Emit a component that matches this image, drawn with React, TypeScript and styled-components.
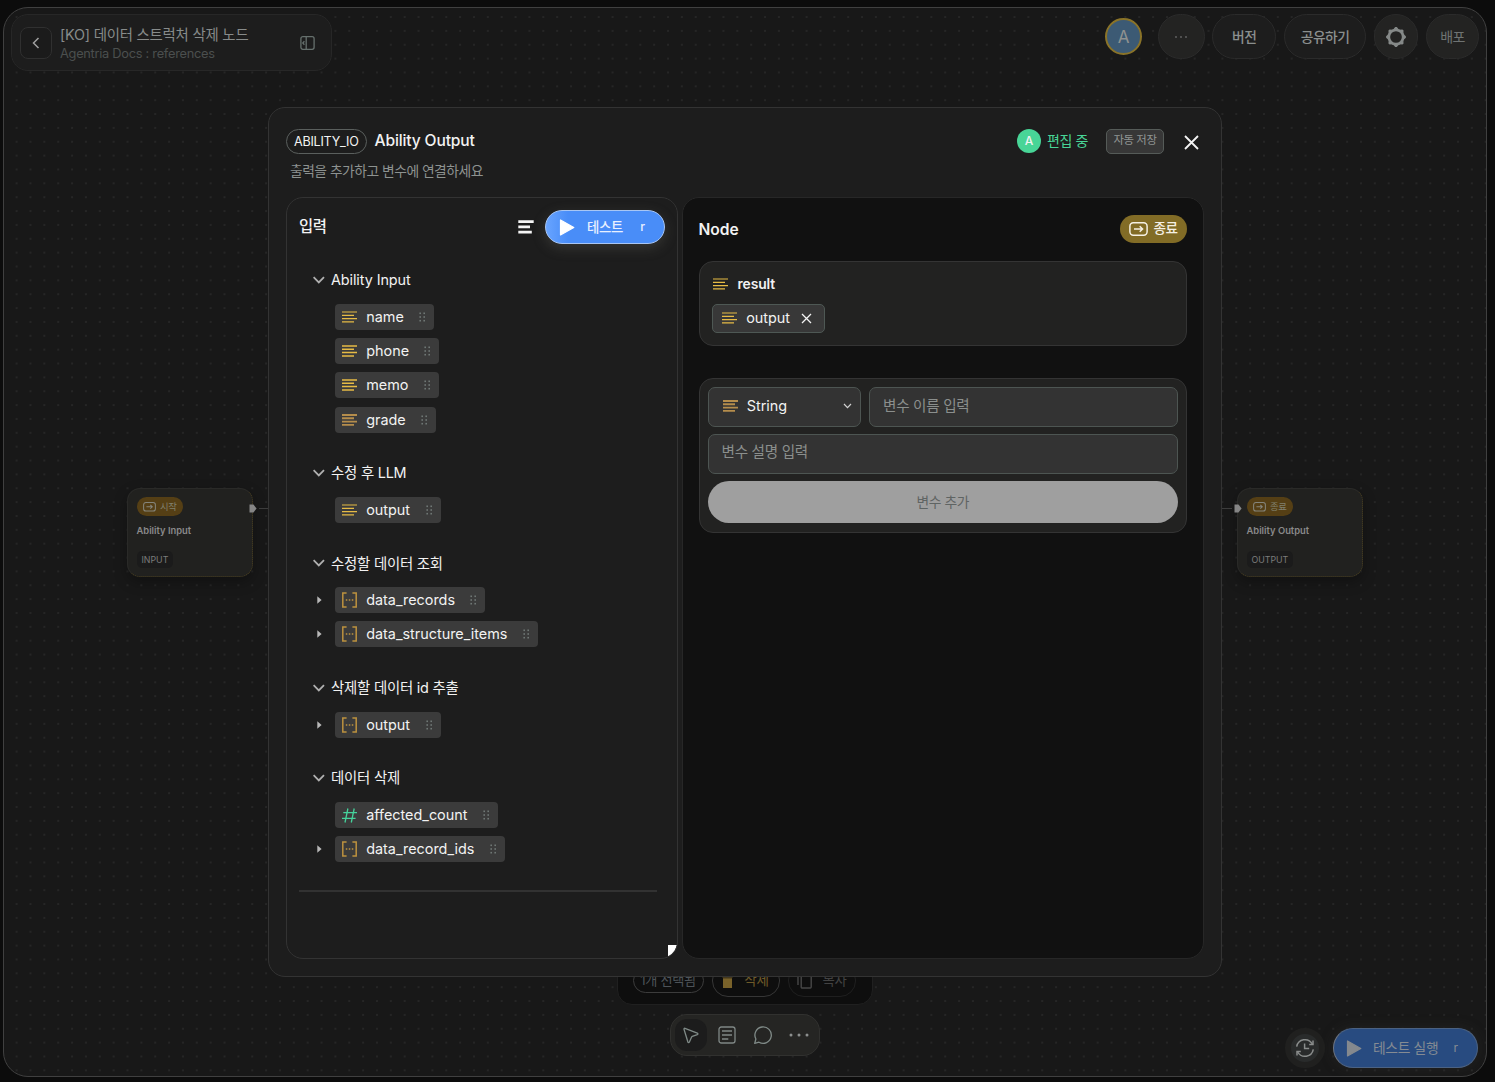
import React from "react";
import styled, { createGlobalStyle, css } from "styled-components";

const FONT = `Inter, "Noto Sans CJK KR", "Noto Sans", sans-serif`;

const GlobalStyle = createGlobalStyle`
  *, *::before, *::after { box-sizing: border-box; }
  body {
    margin: 0;
    background: #0c0c0c;
    font-family: ${FONT};
    color: #f2f2f2;
    overflow: hidden;
  }
  button, input { font-family: inherit; margin: 0; padding: 0; }
  svg { display: block; flex: none; }
`;

/* ---------- shared ---------- */

const Label = styled.span<{
  $size: number;
  $color?: string;
  $weight?: number;
  $track?: number;
}>`
  font-size: ${(p) => p.$size}px;
  line-height: 1.2;
  font-weight: ${(p) => p.$weight ?? 400};
  color: ${(p) => p.$color ?? "#f2f2f2"};
  letter-spacing: ${(p) => p.$track ?? 0}em;
  white-space: nowrap;
`;

const Spacer = styled.div`
  flex: 1;
`;

/* ---------- stage ---------- */

const Page = styled.div`
  display: grid;
  width: 1495px;
  height: 1082px;
  padding: 7px 8px 5px 3px;
  background: #0c0c0c;
`;

const Stage = styled.main`
  position: relative;
  display: flex;
  flex-direction: column;
  justify-content: space-between;
  overflow: hidden;
  border: 1px solid #404040;
  border-radius: 25px;
  background-color: #181818;
  background-image: radial-gradient(circle, #292929 0.6px, transparent 1.1px);
  background-size: 13.87px 13.87px;
  background-position: 5.7px 2.1px;
`;

const TopBar = styled.header`
  display: flex;
  align-items: flex-start;
  padding: 6px 7px 0 7px;
`;

const TitleCard = styled.div`
  display: flex;
  align-items: center;
  width: 321px;
  height: 57px;
  padding: 0 16px 0 8px;
  border: 1px solid #272727;
  border-radius: 17px;
  background: #1d1d1d;
`;

const BackButton = styled.button`
  display: grid;
  place-items: center;
  width: 32px;
  height: 32px;
  margin-right: 8px;
  border: 1px solid #303030;
  border-radius: 8px;
  background: #1b1b1b;
`;

const TitleLines = styled.div`
  display: flex;
  flex-direction: column;
  gap: 3px;
  padding-top: 3px;
`;

const TopActions = styled.div`
  display: flex;
  align-items: center;
  gap: 7.6px;
`;

const UserAvatar = styled.div`
  display: grid;
  place-items: center;
  width: 37px;
  height: 37px;
  margin-right: 8.5px;
  padding-top: 1px;
  border: 2px solid #8a7328;
  border-radius: 50%;
  background: #3c5a74;
`;

const TopPill = styled.button<{ $width: number; $warm?: boolean }>`
  display: grid;
  place-items: center;
  width: ${(p) => p.$width}px;
  height: 45px;
  padding-top: 1px;
  border: 1px solid #2b2b2b;
  border-radius: 23px;
  background: ${(p) => (p.$warm ? "#232322" : "#1d1d1d")};
`;

/* ---------- canvas nodes ---------- */

const NodeCard = styled.article<{ $x: number }>`
  position: absolute;
  left: ${(p) => p.$x}px;
  top: 480px;
  display: flex;
  flex-direction: column;
  align-items: flex-start;
  width: 126px;
  height: 89px;
  padding: 8px 8.5px;
  border: 1px solid #2a2a28;
  border-right: 1px dotted #4b4021;
  border-bottom: 1px dotted #4b4021;
  border-radius: 13px;
  background: #21211f;
  box-shadow: 0 5px 14px rgba(0, 0, 0, 0.3);
`;

const NodeBadge = styled.div`
  display: flex;
  align-items: center;
  gap: 4.5px;
  height: 20px;
  padding: 0 6px;
  border-radius: 10px;
  background: #553f15;
`;

const NodeName = styled.div`
  margin-top: 9px;
  font-size: 9.4px;
  font-weight: 600;
  line-height: 12px;
  color: #8a8a8a;
`;

const NodeTag = styled.div`
  display: flex;
  align-items: center;
  height: 17px;
  margin-top: 14px;
  padding: 0 5px;
  border-radius: 5px;
  background: #1b1b1b;
  font-size: 8.8px;
  color: #7c7c7c;
`;

const Connector = styled.div<{ $x: number; $reverse?: boolean }>`
  position: absolute;
  left: ${(p) => p.$x}px;
  top: 496px;
  display: flex;
  flex-direction: ${(p) => (p.$reverse ? "row-reverse" : "row")};
  align-items: center;
  gap: 2px;
  height: 9px;

  &::after {
    content: "";
    width: 12px;
    height: 1px;
    background: #3c3c3c;
  }
`;

/* ---------- bottom controls ---------- */

const BottomArea = styled.footer`
  display: grid;
  grid-template-columns: 1fr 256px 1fr;
  align-items: end;
`;

const BottomCenter = styled.div`
  display: flex;
  grid-column: 2;
  flex-direction: column;
  align-items: center;
  gap: 9px;
  padding-bottom: 20px;
`;

const SelectionBar = styled.div`
  display: flex;
  align-items: center;
  justify-content: center;
  gap: 8px;
  width: 256px;
  height: 49px;
  padding-right: 2px;
  border: 1px solid #202020;
  border-radius: 15px;
  background: #0e0e0e;
`;

const SelectionPill = styled.div<{ $h: number; $w: number; $line: string }>`
  display: flex;
  align-items: center;
  justify-content: center;
  gap: 11px;
  width: ${(p) => p.$w}px;
  height: ${(p) => p.$h}px;
  border: 1px solid ${(p) => p.$line};
  border-radius: 16px;
`;

const Toolbar = styled.nav`
  display: flex;
  align-items: center;
  gap: 4px;
  height: 42px;
  padding: 0 4px;
  border: 1px solid #31312f;
  border-radius: 17px;
  background: #252523;
`;

const ToolButton = styled.button<{ $active?: boolean }>`
  display: grid;
  place-items: center;
  width: 32px;
  height: 32px;
  border: 0;
  border-radius: 12px;
  background: ${(p) => (p.$active ? "#1c1c1c" : "transparent")};
`;

const RunArea = styled.div`
  display: flex;
  align-items: center;
  justify-content: flex-end;
  gap: 8px;
  padding: 0 8px 8px 0;
`;

const HistoryButton = styled.button`
  display: grid;
  place-items: center;
  width: 40px;
  height: 40px;
  border: 6px solid #20201f;
  border-radius: 50%;
  background: #292b2b;
`;

const RunButton = styled.button`
  display: flex;
  align-items: center;
  width: 145px;
  height: 40px;
  padding: 0 19px 0 11.5px;
  border: 1px solid #4b6283;
  border-left-color: #6d7480;
  border-radius: 20px;
  background: #284b80;
  box-shadow: 0 0 14px rgba(60, 60, 55, 0.3);

  > span:first-of-type {
    margin-left: 11.5px;
  }
`;

/* ---------- modal ---------- */

const Overlay = styled.div`
  position: absolute;
  inset: 0;
  display: grid;
  place-items: center;
  pointer-events: none;
`;

const Dialog = styled.section`
  display: flex;
  flex-direction: column;
  width: 954px;
  height: 870px;
  padding: 20px 17px 17px;
  border: 1px solid #333;
  border-radius: 17px;
  background: #1d1d1d;
`;

const DialogHeader = styled.header`
  display: flex;
  align-items: center;
  height: 26px;
`;

const KindPill = styled.div`
  display: grid;
  place-items: center;
  width: 80.5px;
  height: 25px;
  margin-right: 8px;
  padding-top: 1px;
  border: 1px solid #5a5f5d;
  border-radius: 13px;
`;

const EditorAvatar = styled.div`
  display: grid;
  place-items: center;
  width: 24px;
  height: 24px;
  margin-right: 6px;
  padding-top: 1px;
  border-radius: 50%;
  background: #48d597;
`;

const SaveButton = styled.button`
  display: grid;
  place-items: center;
  width: 58px;
  height: 25px;
  margin: 0 20px 0 18px;
  border: 1px solid #555b58;
  border-radius: 5px;
  background: #373737;
`;

const CloseButton = styled.button`
  display: grid;
  place-items: center;
  width: 15px;
  height: 15px;
  margin: 2px 5px 0 0;
  border: 0;
  background: none;
`;

const DialogHint = styled.p`
  display: flex;
  align-items: center;
  height: 20px;
  margin: 7px 0 16px 4px;
`;

const Panels = styled.div`
  display: grid;
  grid-template-columns: 392px 522px;
  gap: 4px;
  flex: 1;
`;

const InputPanel = styled.section`
  position: relative;
  display: flex;
  flex-direction: column;
  overflow: hidden;
  padding: 12px 12px 0 12px;
  border: 1px solid #333;
  border-radius: 17px;
  background: #1d1d1d;
`;

const InputPanelHeader = styled.div`
  display: flex;
  align-items: center;
  height: 34px;
`;

const TestButton = styled.button`
  display: flex;
  align-items: center;
  width: 120px;
  height: 34px;
  margin-left: 11px;
  padding: 0 19px 0 13px;
  border: 1px solid #a8c6f4;
  border-radius: 17px;
  background: linear-gradient(90deg, #68a4ff 0, #498df8 22px);
  box-shadow: 0 4px 13px rgba(110, 110, 100, 0.32);

  > span:first-of-type {
    margin-left: 12px;
  }
`;

const Tree = styled.div`
  display: flex;
  flex-direction: column;
  gap: 28.3px;
  padding: 24px 0 28px 14px;
`;

const Group = styled.div`
  display: flex;
  flex-direction: column;
  gap: 8.17px;
`;

const GroupTitle = styled.div`
  display: flex;
  align-items: center;
  gap: 6px;
  height: 24px;
  margin-bottom: 3.9px;
`;

const TreeRow = styled.div`
  display: flex;
  align-items: center;
  height: 26px;
`;

const CaretSlot = styled.div`
  width: 22px;
  padding-left: 3.5px;
`;

const Chip = styled.div`
  display: flex;
  align-items: center;
  height: 26px;
  padding: 0 8px 0 7px;
  border-radius: 4px;
  background: #3b3b3b;
`;

const ChipText = styled.span<{ $w: number }>`
  width: ${(p) => p.$w}px;
  margin: 0 14.5px 0 9.2px;
  font-size: 14.4px;
  line-height: 20px;
  white-space: nowrap;
`;

const Divider = styled.hr`
  width: 358px;
  height: 2px;
  margin: 0;
  border: 0;
  background: #323232;
`;

const ResizeHandle = styled.div`
  position: absolute;
  right: 0;
  bottom: 0;
  width: 9px;
  height: 13px;
  background: #fff;
  clip-path: polygon(0 0, 100% 0, 78% 40%, 42% 75%, 0 90%);
`;

const NodePanel = styled.section`
  display: flex;
  flex-direction: column;
  padding: 16px 16px 0 15.5px;
  border: 1px solid #272727;
  border-radius: 17px;
  background: #111;
`;

const NodePanelHeader = styled.div`
  display: flex;
  align-items: center;
  justify-content: space-between;
  height: 29px;
  padding-right: 0.5px;

  > span {
    padding-top: 3px;
  }
`;

const EndBadge = styled.div`
  display: flex;
  align-items: center;
  gap: 6px;
  width: 67px;
  height: 28px;
  padding-left: 9px;
  border-radius: 14px;
  background: #826c26;
`;

const cardSurface = css`
  border: 1px solid #343434;
  border-radius: 14px;
  background: #222221;
`;

const ResultCard = styled.div`
  ${cardSurface}
  display: flex;
  flex-direction: column;
  align-items: flex-start;
  gap: 10px;
  height: 85px;
  margin-top: 18px;
  padding: 12px 12.5px;
`;

const ResultTitle = styled.div`
  display: flex;
  align-items: center;
  gap: 9.5px;
  height: 20px;
  padding-left: 1px;
`;

const OutputChip = styled.div`
  display: flex;
  align-items: center;
  width: 112.5px;
  height: 29.5px;
  padding-left: 9px;
  border: 1px solid #4e5854;
  border-radius: 5px;
  background: #383838;
`;

const FormCard = styled.form`
  ${cardSurface}
  display: grid;
  grid-template-columns: 153.5px 1fr;
  grid-template-rows: 39.5px 39.5px 42px;
  gap: 7.7px 8px;
  height: 154.6px;
  margin-top: 32px;
  padding: 8px;
`;

const fieldSurface = css`
  border: 1px solid #4d5552;
  border-radius: 7px;
  background: #333;
`;

const TypeSelect = styled.div`
  ${fieldSurface}
  display: flex;
  align-items: center;
  padding: 0 8px 1px 14px;
`;

const Field = styled.input<{ $wide?: boolean }>`
  ${fieldSurface}
  grid-column: ${(p) => (p.$wide ? "1 / -1" : "auto")};
  min-width: 0;
  padding: ${(p) => (p.$wide ? "0 13px 4px" : "0 13px 2px")};
  font-size: 14.6px;
  letter-spacing: -0.02em;
  outline: none;

  &::placeholder {
    color: #8b8f8d;
    opacity: 1;
  }
`;

const AddButton = styled.button`
  grid-column: 1 / -1;
  border: 0;
  border-radius: 21px;
  background: #9f9f9f;
`;

/* ---------- icons ---------- */

const LinesIcon = ({ tan, thick }: { tan?: boolean; thick?: boolean }) => (
  <svg width="15" height="12" viewBox="0 0 15 12">
    <path
      d="M0 1H15M0 4.3H12M0 7.6H15M0 10.9H12"
      stroke={tan ? "#b58d4c" : "#e6bb45"}
      strokeWidth={tan ? 1.9 : thick ? 1.5 : 1.2}
    />
  </svg>
);

const ArrayIcon = () => (
  <svg width="15" height="16" viewBox="0 0 15 16" fill="none">
    <path d="M4.6 1H.8v14h3.8M10.4 1h3.8v14h-3.8" stroke="#bd923f" strokeWidth="1.5" />
    <path d="M3.8 8h1.5M6.8 8h1.5M9.8 8h1.5" stroke="#bd923f" strokeWidth="1.3" />
  </svg>
);

const HashIcon = () => (
  <svg width="15" height="15" viewBox="0 0 15 15" fill="none">
    <path d="M5.9.5 3 14.5M12.2.5 9.3 14.5M1.3 4.7H15M0 10.3h13.6" stroke="#45d29b" strokeWidth="1.3" />
  </svg>
);

const GripIcon = () => (
  <svg width="7" height="10" viewBox="0 0 7 10" fill="#6f7775">
    {[0.5, 4.2, 7.9].map((y) => (
      <React.Fragment key={y}>
        <rect x="0.4" y={y} width="1.6" height="1.6" />
        <rect x="4.4" y={y} width="1.6" height="1.6" />
      </React.Fragment>
    ))}
  </svg>
);

const ChevronDown = () => (
  <svg width="12" height="8" viewBox="0 0 12 8" fill="none">
    <path d="M.6 1.2 5.8 6.4 11 1.2" stroke="#b0b0b0" strokeWidth="1.8" />
  </svg>
);

const CaretRight = () => (
  <svg width="5" height="8" viewBox="0 0 5 8">
    <path d="M.3 .3 4.6 4 .3 7.7Z" fill="#b8b8b8" />
  </svg>
);

const PlayIcon = ({ w, h, fill }: { w: number; h: number; fill: string }) => (
  <svg width={w} height={h} viewBox="0 0 15 17">
    <path d="M1 1v15L14.3 8.5Z" fill={fill} stroke={fill} strokeWidth="1.2" strokeLinejoin="round" />
  </svg>
);

const EnterIcon = ({ w, color }: { w: number; color: string }) => (
  <svg width={w} height={(w * 14) / 19} viewBox="0 0 19 14" fill="none" stroke={color} strokeWidth="1.5">
    <rect x=".9" y=".8" width="17.2" height="12.4" rx="3.4" />
    <path d="M5 7h8.4M10.7 4.2 13.6 7l-2.9 2.8" />
  </svg>
);

const CrossIcon = ({ size, stroke }: { size: number; stroke: number }) => (
  <svg width={size} height={size} viewBox={`0 0 ${size} ${size}`}>
    <path
      d={`M1 1 ${size - 1} ${size - 1}M${size - 1} 1 1 ${size - 1}`}
      stroke="#f4f4f4"
      strokeWidth={stroke}
    />
  </svg>
);

const HandleIcon = () => (
  <svg width="8" height="9" viewBox="0 0 8 9">
    <path d="M.5 .5H4.5L7.6 4.5 4.5 8.5H.5Z" fill="#858585" />
  </svg>
);

const BackIcon = () => (
  <svg width="8" height="12" viewBox="0 0 8 12" fill="none">
    <path d="M6.5 1 1.5 6l5 5" stroke="#a0a0a0" strokeWidth="1.5" />
  </svg>
);

const SidebarIcon = () => (
  <svg width="15" height="14" viewBox="0 0 15 14" fill="none" stroke="#66706d" strokeWidth="1.3">
    <rect x=".9" y=".7" width="13.2" height="12.6" rx="2" />
    <path d="M6.2 .7v12.6M4.4 5.2 2.8 7l1.6 1.8" />
  </svg>
);

const GearIcon = () => (
  <svg width="22" height="22" viewBox="0 0 22 22" fill="none">
    <circle cx="11" cy="11" r="7.2" stroke="#858988" strokeWidth="2.7" />
    {[0, 45, 90, 135, 180, 225, 270, 315].map((a) => (
      <path key={a} d="M8.2 3.4 10.2 1.1h1.6L13.8 3.4Z" fill="#858988" transform={`rotate(${a} 11 11)`} />
    ))}
  </svg>
);

const CursorIcon = () => (
  <svg width="16" height="17" viewBox="0 0 16 17" fill="none">
    <path
      d="M2 1.3 14.3 6.2c.8.3.8 1.2 0 1.5L9.3 9.4c-.4.2-.6.4-.8.8L6.4 15c-.4.8-1.3.8-1.5 0L1 2.3c-.2-.7.3-1.2 1-1Z"
      stroke="#7f8a87"
      strokeWidth="1.3"
      strokeLinejoin="round"
    />
  </svg>
);

const NoteIcon = () => (
  <svg width="18" height="18" viewBox="0 0 18 18" fill="none" stroke="#7f8785" strokeWidth="1.3">
    <rect x="1" y="1" width="16" height="16" rx="2.3" />
    <path d="M4 5h10M4 9h10M4 13h6.3" strokeWidth="1.5" />
  </svg>
);

const ChatIcon = () => (
  <svg width="20" height="20" viewBox="0 0 20 20" fill="none">
    <path d="M2.9 14A8.2 8.2 0 1 1 6 17.2L1.7 18.3Z" stroke="#7f8a87" strokeWidth="1.3" strokeLinejoin="round" />
  </svg>
);

const DotsIcon = ({ gap, r, fill }: { gap: number; r: number; fill: string }) => (
  <svg width="22" height="6" viewBox="0 0 22 6" fill={fill}>
    <circle cx={11 - gap} cy="3" r={r} />
    <circle cx="11" cy="3" r={r} />
    <circle cx={11 + gap} cy="3" r={r} />
  </svg>
);

const HistoryIcon = () => (
  <svg width="20" height="20" viewBox="0 0 20 20" fill="none" stroke="#8a8d8c" strokeWidth="1.5">
    <path d="M1.7 8.6A8.4 8.4 0 0 1 17.3 6M18.3 11.4A8.4 8.4 0 0 1 2.7 14" />
    <path d="M18 2.6V6.4H14.2M2 17.4V13.6H5.8" />
    <path d="M9.6 5.6v5h4.6" />
  </svg>
);

const AlignIcon = () => (
  <svg width="16" height="14" viewBox="0 0 16 14">
    <path d="M.3 1.7H15.7M.3 6.9H12M.3 12.1H13.8" stroke="#f5f5f5" strokeWidth="2.7" />
  </svg>
);

const TrashIcon = () => (
  <svg width="11" height="14" viewBox="0 0 11 14">
    <path d="M.5 2h10v1.5H.5zM1 4.2h9V14H1zM3.5 0h4v1.4h-4z" fill="#79622a" />
  </svg>
);

const CopyIcon = () => (
  <svg width="15" height="16" viewBox="0 0 15 16" fill="none" stroke="#474747" strokeWidth="1.4">
    <path d="M1 12V1h1.6" />
    <rect x="4.2" y="1.5" width="10" height="13.5" rx="1" />
  </svg>
);

/* ---------- data ---------- */

type Kind = "string" | "array" | "number";
type Variable = { name: string; kind: Kind; w: number; tan?: boolean; thick?: boolean };

const groups: { title: string; items: Variable[] }[] = [
  {
    title: "Ability Input",
    items: [
      { name: "name", kind: "string", w: 38.5 },
      { name: "phone", kind: "string", w: 43.5, thick: true },
      { name: "memo", kind: "string", w: 43.5, thick: true },
      { name: "grade", kind: "string", w: 40.5, tan: true },
    ],
  },
  { title: "수정 후 LLM", items: [{ name: "output", kind: "string", w: 45.5 }] },
  {
    title: "수정할 데이터 조회",
    items: [
      { name: "data_records", kind: "array", w: 89.5 },
      { name: "data_structure_items", kind: "array", w: 142 },
    ],
  },
  { title: "삭제할 데이터 id 추출", items: [{ name: "output", kind: "array", w: 45.5 }] },
  {
    title: "데이터 삭제",
    items: [
      { name: "affected_count", kind: "number", w: 102.5 },
      { name: "data_record_ids", kind: "array", w: 109.5 },
    ],
  },
];

const KindIcon = ({ item }: { item: Variable }) => {
  if (item.kind === "array") return <ArrayIcon />;
  if (item.kind === "number") return <HashIcon />;
  return <LinesIcon tan={item.tan} thick={item.thick} />;
};

/* ---------- sections ---------- */

const Header = () => (
  <TopBar>
    <TitleCard>
      <BackButton>
        <BackIcon />
      </BackButton>
      <TitleLines>
        <Label $size={14.4} $color="#878b8a" $track={-0.015}>
          [KO] 데이터 스트럭처 삭제 노드
        </Label>
        <Label $size={12.8} $color="#4b4f4e" $track={-0.021}>
          Agentria Docs : references
        </Label>
      </TitleLines>
      <Spacer />
      <SidebarIcon />
    </TitleCard>
    <Spacer />
    <TopActions>
      <UserAvatar>
        <Label $size={17} $color="#8f9290">A</Label>
      </UserAvatar>
      <TopPill $width={46.5} $warm>
        <DotsIcon gap={5} r={0.9} fill="#666" />
      </TopPill>
      <TopPill $width={64}>
        <Label $size={13.8} $weight={500} $color="#8b8f8e" $track={-0.04}>버전</Label>
      </TopPill>
      <TopPill $width={82.5}>
        <Label $size={13.8} $weight={500} $color="#8b8f8e" $track={-0.04}>공유하기</Label>
      </TopPill>
      <TopPill $width={44.5} $warm>
        <GearIcon />
      </TopPill>
      <TopPill $width={53} $warm>
        <Label $size={14} $color="#6f7372" $track={-0.04}>배포</Label>
      </TopPill>
    </TopActions>
  </TopBar>
);

const CanvasNode = ({ x, badge, name, tag }: { x: number; badge: string; name: string; tag: string }) => (
  <NodeCard $x={x}>
    <NodeBadge>
      <EnterIcon w={13} color="#85857c" />
      <Label $size={9.4} $color="#81816f" $track={-0.04}>{badge}</Label>
    </NodeBadge>
    <NodeName>{name}</NodeName>
    <NodeTag>{tag}</NodeTag>
  </NodeCard>
);

const InputSection = () => (
  <InputPanel>
    <InputPanelHeader>
      <Label $size={15.4} $weight={500} $track={-0.03}>입력</Label>
      <Spacer />
      <AlignIcon />
      <TestButton>
        <PlayIcon w={16} h={17} fill="#fff" />
        <Label $size={13.4} $weight={500} $color="#e8f0ff" $track={-0.02}>테스트</Label>
        <Spacer />
        <Label $size={12.4} $weight={500} $color="#e8f0ff">r</Label>
      </TestButton>
    </InputPanelHeader>
    <Tree>
      {groups.map((group) => (
        <Group key={group.title}>
          <GroupTitle>
            <ChevronDown />
            <Label $size={14.4} $track={group.title === "Ability Input" ? -0.006 : -0.015}>{group.title}</Label>
          </GroupTitle>
          {group.items.map((item) => (
            <TreeRow key={item.name}>
              <CaretSlot>{item.kind === "array" && <CaretRight />}</CaretSlot>
              <Chip>
                <KindIcon item={item} />
                <ChipText $w={item.w}>{item.name}</ChipText>
                <GripIcon />
              </Chip>
            </TreeRow>
          ))}
        </Group>
      ))}
    </Tree>
    <Divider />
    <ResizeHandle />
  </InputPanel>
);

const NodeSection = () => (
  <NodePanel>
    <NodePanelHeader>
      <Label $size={15.6} $weight={600}>Node</Label>
      <EndBadge>
        <EnterIcon w={19} color="#f5f0e4" />
        <Label $size={13.6} $weight={500} $color="#f5f0e4" $track={-0.04}>종료</Label>
      </EndBadge>
    </NodePanelHeader>
    <ResultCard>
      <ResultTitle>
        <LinesIcon />
        <Label $size={13.9} $weight={600} $track={-0.01}>result</Label>
      </ResultTitle>
      <OutputChip>
        <LinesIcon />
        <ChipText $w={40}>output</ChipText>
        <CrossIcon size={11} stroke={1.3} />
      </OutputChip>
    </ResultCard>
    <FormCard>
      <TypeSelect>
        <LinesIcon tan />
        <ChipText $w={42}>String</ChipText>
        <Spacer />
        <svg width="9" height="6" viewBox="0 0 9 6" fill="none">
          <path d="M1 1 4.5 4.6 8 1" stroke="#d2d2d2" strokeWidth="1.2" />
        </svg>
      </TypeSelect>
      <Field placeholder="변수 이름 입력" />
      <Field $wide placeholder="변수 설명 입력" />
      <AddButton type="button">
        <Label $size={13.8} $color="#5f6463" $track={-0.03}>변수 추가</Label>
      </AddButton>
    </FormCard>
  </NodePanel>
);

const Modal = () => (
  <Overlay>
    <Dialog>
      <DialogHeader>
        <KindPill>
          <Label $size={12.6} $track={-0.018}>ABILITY_IO</Label>
        </KindPill>
        <Label $size={15.6} $weight={500} $track={-0.009}>Ability Output</Label>
        <Spacer />
        <EditorAvatar>
          <Label $size={12} $weight={500}>A</Label>
        </EditorAvatar>
        <Label $size={14} $color="#48d597" $track={-0.03}>편집 중</Label>
        <SaveButton>
          <Label $size={11.4} $color="#919594" $track={-0.04}>자동 저장</Label>
        </SaveButton>
        <CloseButton>
          <CrossIcon size={15} stroke={1.8} />
        </CloseButton>
      </DialogHeader>
      <DialogHint>
        <Label $size={13.8} $color="#8d9290" $track={-0.037}>출력을 추가하고 변수에 연결하세요</Label>
      </DialogHint>
      <Panels>
        <InputSection />
        <NodeSection />
      </Panels>
    </Dialog>
  </Overlay>
);

export default function App() {
  return (
    <>
      <GlobalStyle />
      <Page>
        <Stage>
          <Header />
          <CanvasNode x={123} badge="시작" name="Ability Input" tag="INPUT" />
          <CanvasNode x={1233} badge="종료" name="Ability Output" tag="OUTPUT" />
          <Connector $x={245}>
            <HandleIcon />
          </Connector>
          <Connector $x={1216} $reverse>
            <HandleIcon />
          </Connector>
          <BottomArea>
            <BottomCenter>
              <SelectionBar>
                <SelectionPill $h={25} $w={71} $line="#3c3c3c">
                  <Label $size={13.2} $color="#4d5358" $track={-0.025}>1개 선택됨</Label>
                </SelectionPill>
                <SelectionPill $h={33} $w={68} $line="#363636">
                  <TrashIcon />
                  <Label $size={13.6} $color="#6e5a28" $track={-0.02}>삭제</Label>
                </SelectionPill>
                <SelectionPill $h={33} $w={68} $line="#1f1f1f">
                  <CopyIcon />
                  <Label $size={13.4} $color="#424242" $track={-0.03}>복사</Label>
                </SelectionPill>
              </SelectionBar>
              <Toolbar>
                <ToolButton $active>
                  <CursorIcon />
                </ToolButton>
                <ToolButton>
                  <NoteIcon />
                </ToolButton>
                <ToolButton>
                  <ChatIcon />
                </ToolButton>
                <ToolButton>
                  <DotsIcon gap={8} r={1.5} fill="#8c8f8e" />
                </ToolButton>
              </Toolbar>
            </BottomCenter>
            <RunArea>
              <HistoryButton>
                <HistoryIcon />
              </HistoryButton>
              <RunButton>
                <PlayIcon w={16} h={17} fill="#85898e" />
                <Label $size={13.8} $color="#858b93" $track={-0.025}>테스트 실행</Label>
                <Spacer />
                <Label $size={12} $color="#858b93">r</Label>
              </RunButton>
            </RunArea>
          </BottomArea>
          <Modal />
        </Stage>
      </Page>
    </>
  );
}
